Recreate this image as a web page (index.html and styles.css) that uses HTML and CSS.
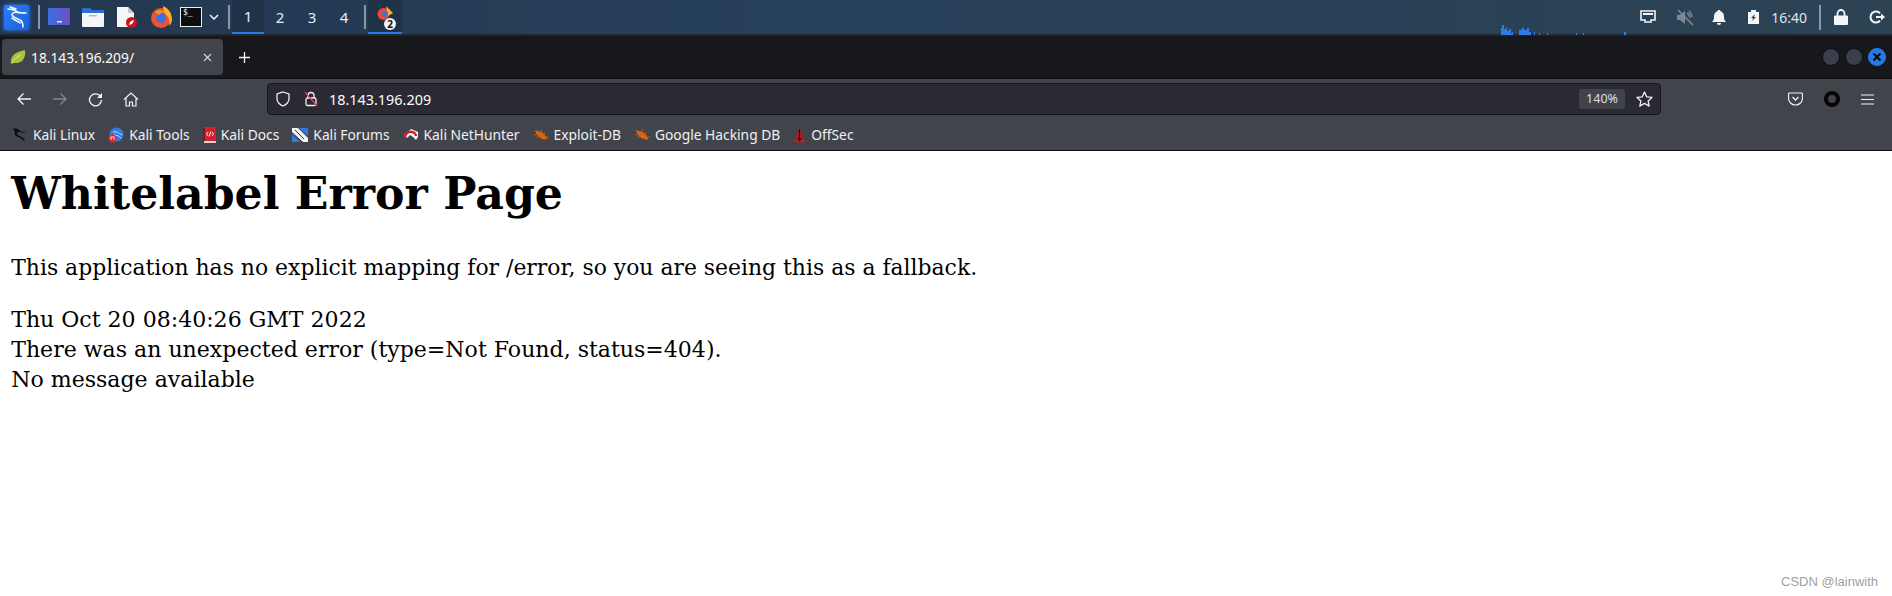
FILE: index.html
```html
<!DOCTYPE html>
<html lang="en">
<head>
<meta charset="utf-8">
<title>18.143.196.209/</title>
<link rel="stylesheet" href="styles.css">
</head>
<body>
<header class="panel">
  <div class="panel-left">
    <span class="launcher"><svg width="24" height="24" viewBox="0 0 24 24"><path d="M3 4c4 0 7 1 10 3 2 1 5 1 8 1M15 8c-3-1-7-1-8 1-1 3 5 4 8 6 2 1 3 3 3 7M11 4C9 3 7 3 5 2M7 13c2 2 6 3 8 5" fill="none" stroke="#fff" stroke-width="1.500" stroke-linecap="round"/></svg></span>
    <span class="sep first"></span>
    <span class="app"><svg width="22" height="18" viewBox="0 0 22 18"><defs><linearGradient id="dg" x1="0" x2="1" y1="0" y2="0"><stop offset="0" stop-color="#3b6fe0"/><stop offset="1" stop-color="#6a4fc0"/></linearGradient></defs><rect width="22" height="17" rx="1" fill="url(#dg)"/><rect x="9" y="13" width="5" height="1.500" fill="#dfe6ff"/></svg></span>
    <span class="app"><svg width="22" height="20" viewBox="0 0 22 20"><path d="M0 2a1 1 0 0 1 1-1h7l2 2h12v3H0z" fill="#2a6fd8"/><path d="M0 6h22v13a1 1 0 0 1-1 1H1a1 1 0 0 1-1-1z" fill="#f4f5f6"/><rect x="7" y="8" width="8" height="1.500" fill="#bbb"/></svg></span>
    <span class="app"><svg width="22" height="22" viewBox="0 0 22 22"><path d="M1 1h11l6 6v14H1z" fill="#f6f6f6"/><path d="M12 1l6 6h-6z" fill="#c9c9c9"/><circle cx="15.500" cy="16.500" r="5.500" fill="#c4141c"/><path d="M13 19l1-3 3-2 1 1-2 3z" fill="#fff"/></svg></span>
    <span class="app"><svg width="22" height="22" viewBox="0 0 22 22"><circle cx="11" cy="12" r="10" fill="#f0532b"/><path d="M13 0c5 2 9 7 9 13 0 3-1 5-3 7 1-4 0-9-3-11-2-3-3-6-3-9z" fill="#fbb02d"/><circle cx="11" cy="12" r="5" fill="#3f6fe0"/><path d="M5 6c3-3 8-2 11 1-3-1-6 0-7 2z" fill="#f8941e"/></svg></span>
    <span class="app term-app"><span class="term">$_</span></span>
    <span class="chev"><svg width="10" height="6" viewBox="0 0 10 6"><path d="M1 1l4 4 4-4" fill="none" stroke="#e8edf2" stroke-width="1.600"/></svg></span>
    <span class="sep"></span>
    <div class="workspaces">
      <span class="ws active">1</span>
      <span class="ws">2</span>
      <span class="ws">3</span>
      <span class="ws">4</span>
    </div>
    <span class="sep"></span>
    <span class="task"><svg width="18" height="16" viewBox="0 0 18 16"><circle cx="6.500" cy="8" r="6" fill="#ef4a2b"/><path d="M9 0l7 7-5 3z" fill="#fbb02d"/><circle cx="8" cy="8" r="3" fill="#3f6fe0"/></svg><span class="badge">2</span></span>
  </div>
  <svg class="graph" width="130" height="10" viewBox="0 0 130 10"><path d="M0 10V3h1V0h2v4h2V2h1v4h2V4h2v4h1V7h1v3zM18 10V5h3V3h2v2h3V3h2v4h2v3zM33 10V7h1v3zM38 10V8h1v2zM46 10V8h1v2zM75 10V8h1v2zM82 10V8h1v2zM123 10V7h2v3z" fill="#2f7ae5"/></svg>
  <div class="panel-right">
    <svg class="tray-a" width="16" height="14" viewBox="0 0 16 14"><path d="M1 1h14v9h-4v2H5v-2H1z" fill="none" stroke="#f2f4f6" stroke-width="1.600"/><path d="M3 3h10v2H3z" fill="#f2f4f6"/></svg>
    <svg class="tray-b" width="18" height="17" viewBox="0 0 18 17"><path d="M1 6h3l5-4v13l-5-4H1z" fill="#7d8a95"/><path d="M11 4c2 1 3 3 3 5M13 2c2 2 3 4 3 6" fill="none" stroke="#7d8a95" stroke-width="1.400"/><path d="M2 1l15 15" stroke="#7d8a95" stroke-width="1.600"/></svg>
    <svg class="tray-c" width="14" height="15" viewBox="0 0 14 15"><path d="M7 0c1 0 1.400.6 1.500 1.300C10.800 2 12 4 12 6.500c0 3 .6 4 2 5.500H0c1.400-1.500 2-2.500 2-5.500C2 4 3.200 2 5.500 1.300 5.600.6 6 0 7 0z" fill="#f4f6f8"/><path d="M5 13h4a2 2 0 0 1-4 0z" fill="#f4f6f8"/></svg>
    <svg class="tray-d" width="11" height="14" viewBox="0 0 11 14"><path d="M3 0h5v2h3v12H0V2h3z" fill="#f4f6f8"/><path d="M7 4L3 8h2l-1 3 4-4H6z" fill="#2c4354"/></svg>
    <span class="clock">16:40</span>
    <span class="sep tall"></span>
    <svg class="tray-e" width="14" height="16" viewBox="0 0 14 16"><path d="M3.500 7V4.500a3.500 3.500 0 0 1 7 0V7" fill="none" stroke="#f4f6f8" stroke-width="1.800"/><rect y="6.500" width="14" height="9.500" rx="1" fill="#f4f6f8"/></svg>
    <svg class="tray-f" width="16" height="14" viewBox="0 0 16 14"><path d="M11 3.200A5.500 5.500 0 1 0 11 10.800" fill="none" stroke="#f4f6f8" stroke-width="2"/><path d="M7 6h5V3.500L16 7l-4 3.500V8H7z" fill="#f4f6f8"/></svg>
  </div>
</header>

<div class="tabbar">
  <div class="tab">
    <svg width="16" height="16" viewBox="0 0 16 16"><path d="M1 15C0 9 3 3 15 1c1 7-2 13-9 13-2 0-4 0-5 1z" fill="#a5c63a"/><path d="M2 14c2-4 5-6 9-8" fill="none" stroke="#dbe88a" stroke-width="1"/></svg>
    <span class="tab-title">18.143.196.209/</span>
    <svg class="tab-close" width="9" height="9" viewBox="0 0 9 9"><path d="M1 1l7 7M8 1l-7 7" stroke="#d5d6da" stroke-width="1.100"/></svg>
  </div>
  <svg class="newtab" width="13" height="13" viewBox="0 0 13 13"><path d="M6.500 1v11M1 6.500h11" stroke="#f4f4f6" stroke-width="1.300"/></svg>
  <div class="winbtns">
    <span class="winbtn"></span>
    <span class="winbtn"></span>
    <span class="winbtn close"><svg width="10" height="10" viewBox="0 0 10 10"><path d="M1.500 1.500l7 7M8.500 1.500l-7 7" stroke="#0b0c10" stroke-width="2.200"/></svg></span>
  </div>
</div>

<div class="navbar">
  <div class="nav-left">
    <svg width="16" height="14" viewBox="0 0 16 14"><path d="M15 7H2M7.500 1.500L2 7l5.500 5.500" fill="none" stroke="#f3f3f5" stroke-width="1.300"/></svg>
    <svg width="16" height="14" viewBox="0 0 16 14"><path d="M1 7h13M8.500 1.500L14 7l-5.500 5.500" fill="none" stroke="#84858b" stroke-width="1.300"/></svg>
    <svg width="15" height="15" viewBox="0 0 15 15"><path d="M12.800 5A6 6 0 1 0 13.500 8" fill="none" stroke="#f3f3f5" stroke-width="1.300"/><path d="M14 1v5H9z" fill="#f3f3f5"/></svg>
    <svg width="16" height="15" viewBox="0 0 16 15"><path d="M1 7.500L8 1l7 6.500M3 6v8h3.500v-4h3v4H13V6" fill="none" stroke="#f3f3f5" stroke-width="1.200"/></svg>
  </div>
  <div class="urlbar">
    <svg class="shield" width="14" height="16" viewBox="0 0 14 16"><path d="M7 1l6 2v5c0 3-3 6-6 7-3-1-6-4-6-7V3z" fill="none" stroke="#f0f0f3" stroke-width="1.300"/></svg>
    <svg class="lock" width="14" height="16" viewBox="0 0 14 16"><path d="M4 7V4.500a3 3 0 0 1 6 0V7" fill="none" stroke="#f0f0f3" stroke-width="1.300"/><rect x="2" y="7" width="10" height="7.500" rx="1.500" fill="none" stroke="#f0f0f3" stroke-width="1.300"/><path d="M1 1l12 14" stroke="#e2405c" stroke-width="1.200"/></svg>
    <span class="url">18.143.196.209</span>
    <span class="zoom">140%</span>
    <svg class="star" width="17" height="16" viewBox="0 0 17 16"><path d="M8.500 1l2.200 4.800 5.300.6-3.900 3.500 1.100 5.200-4.700-2.700-4.700 2.700 1.100-5.200L1 6.400l5.300-.6z" fill="none" stroke="#f0f0f3" stroke-width="1.300" stroke-linejoin="round"/></svg>
  </div>
  <div class="nav-right">
    <svg width="15" height="14" viewBox="0 0 15 14"><path d="M1.500 1h12a1 1 0 0 1 1 1v4c0 4-3 7-7 7s-7-3-7-7V2a1 1 0 0 1 1-1z" fill="none" stroke="#f0f0f3" stroke-width="1.200"/><path d="M4.500 5l3 3 3-3" fill="none" stroke="#f0f0f3" stroke-width="1.300"/></svg>
    <span class="ring"></span>
    <svg width="13" height="11" viewBox="0 0 13 11"><path d="M0 1h13M0 5.500h13M0 10h13" stroke="#f0f0f3" stroke-width="1.200"/></svg>
  </div>
</div>

<nav class="bookmarks">
  <a class="bm"><svg width="16" height="16" viewBox="0 0 16 16"><path d="M1 2c3-1 6 0 7 2 2 1 5 1 7 1-3 1-5 1-7 0-2 0-3 0-3 2 1 2 5 2 7 5l1 4c-1-3-4-5-7-6-3-1-4-3-3-5 0-1-1-2-2-3z" fill="#0c0c0e"/></svg>Kali Linux</a>
  <a class="bm"><svg width="16" height="16" viewBox="0 0 16 16"><circle cx="8.500" cy="7.500" r="7" fill="#2f7ae5"/><path d="M5 5c3-1 6 1 9 3M6 8c3 0 5 1 7 3" fill="none" stroke="#cfe2fb" stroke-width="1"/><circle cx="4.500" cy="11.500" r="4" fill="#e0262c"/><path d="M3 10v3M6 10v3M2.500 10h4" stroke="#fff" stroke-width=".8"/></svg>Kali Tools</a>
  <a class="bm"><svg width="13" height="16" viewBox="0 0 13 16"><rect x="1" width="12" height="14" fill="#d4202a"/><rect y="1" width="2" height="15" fill="#7d1a20"/><path d="M1 14h12v2H1z" fill="#d8d8d8"/><path d="M5 5L3.500 7 5 9M9 5l1.500 2L9 9M7.800 4.500L6.200 9.500" fill="none" stroke="#fff" stroke-width=".9"/></svg>Kali Docs</a>
  <a class="bm"><svg width="16" height="16" viewBox="0 0 16 16"><path d="M0 1h6l10 10v4h-5L0 5z" fill="#f1f3f6"/><path d="M7 1h9v8zM0 7l8 8H0z" fill="#2f7ae5"/><path d="M3 3l9 9" stroke="#333" stroke-width="1"/></svg>Kali Forums</a>
  <a class="bm"><svg width="16" height="16" viewBox="0 0 16 16"><path d="M1 8l7-6 7 3v5l-2 3-3-3-3-2-3 3z" fill="#f3f3f3"/><path d="M2 11c0-4 3-7 7-6 2 0 4 2 4 4" fill="none" stroke="#cf1f26" stroke-width="2.400"/></svg>Kali NetHunter</a>
  <a class="bm"><svg width="16" height="14" viewBox="0 0 16 14"><path d="M2 2l3 1c3 0 7 3 9 7 .4 1-.5 2-2 1.500C8 11 4 8 3 5z" fill="#e0620f"/><path d="M1 7l3-1M3 10l3-2M8 1l1 3M12 4l-1 2M14 9h2" stroke="#c9601c" stroke-width=".8"/></svg>Exploit-DB</a>
  <a class="bm"><svg width="16" height="14" viewBox="0 0 16 14"><path d="M2 2l3 1c3 0 7 3 9 7 .4 1-.5 2-2 1.500C8 11 4 8 3 5z" fill="#e0620f"/><path d="M1 7l3-1M3 10l3-2M8 1l1 3M12 4l-1 2M14 9h2" stroke="#c9601c" stroke-width=".8"/></svg>Google Hacking DB</a>
  <a class="bm"><svg width="13" height="17" viewBox="0 0 13 17"><path d="M6.500 0L9 11l4 5H0l4-5z" fill="#d4141c"/><path d="M6.500 3v12M4.500 13h4" stroke="#3a0508" stroke-width="1.400"/></svg>OffSec</a>
</nav>

<main class="page">
  <h1>Whitelabel Error Page</h1>
  <p>This application has no explicit mapping for /error, so you are seeing this as a fallback.</p>
  <div>Thu Oct 20 08:40:26 GMT 2022</div>
  <div>There was an unexpected error (type=Not Found, status=404).</div>
  <div>No message available</div>
</main>
<div class="watermark">CSDN @lainwith</div>
</body>
</html>
```
FILE: styles.css
```css
* { box-sizing: border-box; }
html, body { margin: 0; height: 596px; overflow: hidden; background: #fff; }
body { display: flex; flex-direction: column; position: relative; font-family: "Noto Sans", sans-serif; }
svg { display: block; flex: none; }

.panel { height: 36px; flex: none; display: flex; align-items: center; justify-content: space-between; background: linear-gradient(90deg, #243750 0%, #27405a 40%, #2c4354 100%); border-bottom: 2px solid #202630; position: relative; }
.panel-left { display: flex; align-items: center; height: 34px; padding-left: 4px; }
.launcher { width: 25px; height: 25px; border-radius: 2px; background: linear-gradient(135deg, #2a80ff, #1c5fd8); box-shadow: 0 0 4px #2a80ff; display: flex; align-items: center; justify-content: center; }
.sep { width: 2px; height: 24px; background: #8a98a5; margin: 0 2px 0 4px; flex: none; }
.sep.first { margin-left: 9px; }
.app { width: 34px; height: 34px; display: flex; align-items: center; justify-content: center; }
.app.term-app { width: 26px; margin-left: 0; }
.term { width: 22px; height: 20px; background: #0e0e10; border: 1px solid #eceff2; font: 8px/10px "DejaVu Sans Mono", monospace; color: #fff; padding-left: 2px; }
.chev { width: 20px; display: flex; justify-content: center; }
.workspaces { display: flex; height: 34px; background: #243a54; }
.ws { width: 32px; height: 34px; display: flex; align-items: center; justify-content: center; font-size: 15px; color: #e6eef6; }
.ws.active { background: #1f3248; border-bottom: 2px solid #2878e8; }
.task { width: 34px; height: 34px; background: #1f3248; border-bottom: 2px solid #2878e8; position: relative; display: flex; align-items: center; padding: 0 0 4px 9px; }
.badge { position: absolute; left: 16px; top: 18px; width: 12px; height: 12px; border-radius: 50%; background: #f4f4f4; color: #111; font: 700 10px/12px "Noto Sans", sans-serif; text-align: center; }
.graph { position: absolute; left: 1501px; top: 25px; }
.panel-right { display: flex; align-items: center; height: 34px; padding-right: 7px; }
.tray-a { margin-right: 20px; }
.tray-b { margin-right: 18px; }
.tray-c { margin-right: 22px; }
.tray-d { margin-right: 12px; }
.clock { font-size: 14px; color: #dfe6ec; }
.sep.tall { height: 25px; margin: 0 13px 0 12px; }
.tray-e { margin-right: 21px; }

.tabbar { height: 43px; flex: none; background: #17181c; display: flex; align-items: center; padding-left: 2px; position: relative; border-bottom: 1px solid #0e0f12; }
.tab { width: 221px; height: 36px; border-radius: 4px; background: #42444c; display: flex; align-items: center; padding: 0 11px 0 8px; color: #fbfbfe; }
.tab-title { flex: 1; font-size: 13.800px; margin-left: 5px; }
.newtab { margin-left: 15px; }
.winbtns { margin-left: auto; display: flex; gap: 5px; padding-right: 6px; }
.winbtn { width: 18px; height: 18px; border-radius: 50%; background: #3a3f4c; border: 1px solid #0d0e12; display: flex; align-items: center; justify-content: center; }
.winbtn.close { background: #2878e8; border-color: #2878e8; }

.navbar { height: 40px; flex: none; background: #42444c; display: flex; align-items: center; }
.nav-left { width: 267px; display: flex; align-items: center; gap: 20px; padding-left: 16px; }
.urlbar { width: 1394px; height: 32px; background: #2b2a33; border: 1px solid #16171b; border-radius: 4px; display: flex; align-items: center; padding-left: 8px; padding-right: 7px; }
.lock { margin-left: 14px; }
.url { flex: 1; margin-left: 11px; font-size: 14.400px; color: #fbfbfe; }
.zoom { width: 46px; height: 20px; margin-right: 11px; border-radius: 3px; background: #42444c; font-size: 12.500px; line-height: 20px; text-align: center; color: #dcdde2; }
.nav-right { flex: 1; display: flex; align-items: center; justify-content: flex-end; gap: 21px; padding-right: 18px; }
.ring { width: 16px; height: 16px; border-radius: 50%; border: 4.500px solid #050505; background: #42444c; }

.bookmarks { height: 32px; flex: none; background: #42444c; border-bottom: 1px solid #0c0d10; display: flex; align-items: center; padding-left: 12px; gap: 13px; }
.bm { display: flex; align-items: center; gap: 5px; font-size: 13.800px; color: #f0f0f3; }

.page { flex: 1; padding: 16px 11.200px; font-family: "DejaVu Serif", serif; font-size: 22.050px; color: #000; line-height: 30px; }
.page h1 { margin: 0 0 34px; font-size: 44.200px; font-weight: 700; line-height: 52px; }
.page p { margin: 0 0 22px; font-size: 21.900px; }
.watermark { position: absolute; right: 14px; bottom: 7px; font: 13px "Liberation Sans", sans-serif; color: #a0a0a0; }
```
